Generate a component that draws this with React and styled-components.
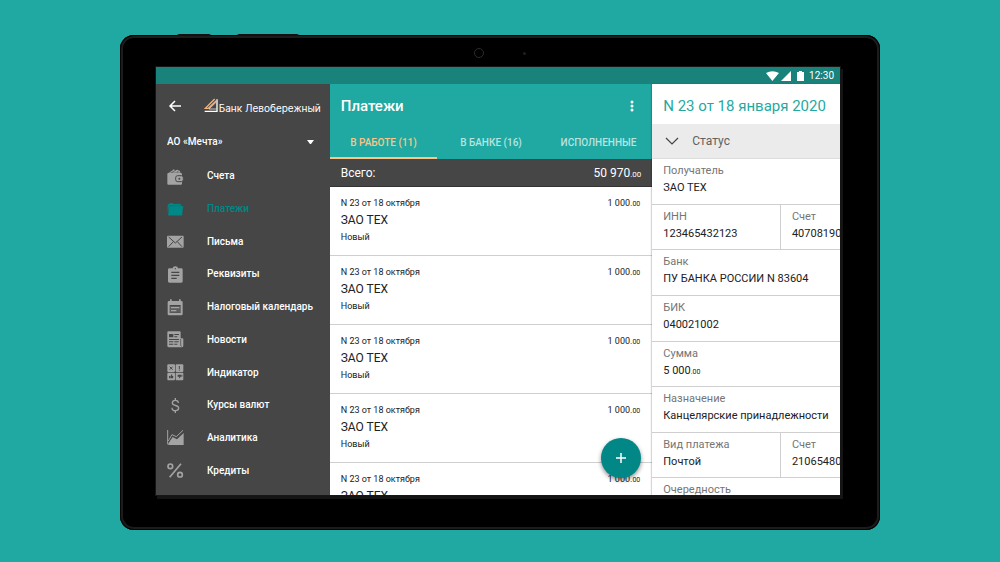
import React, { useState } from 'react';
import styled, { createGlobalStyle, ThemeProvider } from 'styled-components';

const theme = {
  teal: '#1fa9a2',
  tealDeep: '#018786',
  statusBar: '#18827b',
  dark: '#464646',
  icon: '#a3a3a3',
  accent: '#fbc58a',
  line: '#cfcfcf',
  muted: '#757575',
  text: '#212121',
};

const GlobalStyle = createGlobalStyle`
  *, *::before, *::after { box-sizing: border-box; }
  body { margin: 0; font-family: Roboto, "Liberation Sans", sans-serif; }
  h1, h2, p, ul, dl, dd { margin: 0; padding: 0; }
  button, select { font: inherit; border: 0; background: none; padding: 0; cursor: pointer; }
`;

const Page = styled.div`
  height: 100vh;
  min-height: 420px;
  padding: 35px 12% 32px;
  background: ${(p) => p.theme.teal};
  display: flex;
`;

const Tablet = styled.div`
  position: relative;
  flex: 1;
  min-width: 0;
  display: flex;
  padding: 32px 40px 35px 36px;
  background: #000;
  border-radius: 14px;
  box-shadow: inset 0 0 0 1px #000, inset 0 0 0 3px #1c1c1c;
`;

const SideKey = styled.span`
  position: absolute;
  top: -1px;
  left: ${(p) => p.$left}px;
  width: ${(p) => p.$width}px;
  height: 2px;
  background: #111;
  border-radius: 2px 2px 0 0;
`;

const Camera = styled.span`
  position: absolute;
  top: 13px;
  left: 47%;
  width: 10px;
  height: 10px;
  margin-left: -3px;
  border-radius: 50%;
  border: 1px solid #2c2c2c;
`;

const Sensor = styled.span`
  position: absolute;
  top: 17px;
  left: 53%;
  width: 3px;
  height: 3px;
  border-radius: 50%;
  background: #1f1f1f;
`;

const Screen = styled.div`
  flex: 1;
  min-width: 0;
  display: flex;
  flex-direction: column;
  overflow: hidden;
  background: #fff;
  box-shadow: 0 0 0 1px #161616, 2px 3px 0 1px #141414;
`;

const StatusBar = styled.div`
  flex: none;
  height: 17px;
  padding: 0 6px;
  display: flex;
  align-items: center;
  justify-content: flex-end;
  gap: 2px;
  background: ${(p) => p.theme.statusBar};
  color: #fff;
  font-size: 10px;
  line-height: 17px;
  svg { display: block; }
`;

const Columns = styled.div`
  flex: 1;
  min-height: 0;
  display: grid;
  grid-template-columns: 174fr 323fr 188fr;
`;

const Sidebar = styled.aside`
  min-width: 0;
  min-height: 0;
  display: flex;
  flex-direction: column;
  padding-bottom: 8px;
  background: ${(p) => p.theme.dark};
  color: #fff;
`;

const Brand = styled.div`
  height: 44px;
  padding: 0 9px 0 11px;
  display: flex;
  align-items: center;
  justify-content: space-between;
`;

const IconButton = styled.button`
  display: flex;
  color: #fff;
`;

const Logo = styled.a`
  display: flex;
  align-items: flex-end;
  gap: 1px;
  color: #fff;
  text-decoration: none;
  white-space: nowrap;
  font-family: Inter, Roboto, sans-serif;
  font-size: 10px;
  line-height: 12px;
`;

const Account = styled.label`
  height: 32px;
  padding: 0 16px 5px 11px;
  display: flex;
  align-items: center;
  select {
    flex: 1;
    appearance: none;
    color: #fff;
    font-size: 10px;
    font-weight: 500;
    line-height: 16px;
    outline: none;
  }
`;

const Nav = styled.nav`
  flex: 1;
  min-height: 0;
  display: grid;
  grid-auto-rows: 1fr;
`;

const NavItem = styled.a`
  min-height: 0;
  padding-left: 11px;
  display: flex;
  align-items: center;
  gap: 23px;
  color: ${(p) => (p.$active ? p.theme.tealDeep : '#fff')};
  font-size: 10px;
  font-weight: 500;
  line-height: 16px;
  text-decoration: none;
  white-space: nowrap;
  svg { flex: none; color: ${(p) => (p.$active ? p.theme.tealDeep : p.theme.icon)}; }
`;

const Main = styled.main`
  position: relative;
  min-width: 0;
  min-height: 0;
  display: flex;
  flex-direction: column;
  overflow: hidden;
  background: #fff;
`;

const MainHeader = styled.header`
  flex: none;
  background: ${(p) => p.theme.teal};
  color: #fff;
`;

const TitleRow = styled.div`
  height: 43px;
  padding: 0 18px 0 11px;
  display: flex;
  align-items: center;
  justify-content: space-between;
  h1 { font-size: 15px; font-weight: 500; line-height: 20px; }
`;

const Tabs = styled.div`
  display: grid;
  grid-template-columns: repeat(3, 1fr);
`;

const Tab = styled.button`
  height: 32px;
  border-bottom: 2px solid ${(p) => (p.$active ? p.theme.accent : 'transparent')};
  color: ${(p) => (p.$active ? p.theme.accent : '#b9e3e0')};
  font-size: 10px;
  font-weight: 500;
  white-space: nowrap;
`;

const Total = styled.div`
  flex: none;
  height: 28px;
  padding: 0 11px;
  display: flex;
  align-items: center;
  justify-content: space-between;
  background: ${(p) => p.theme.dark};
  border-bottom: 1px solid #333;
  color: #fff;
  font-size: 12px;
`;

const Cents = styled.small`
  font-size: ${(p) => p.$size || 7}px;
`;

const Payments = styled.ul`
  list-style: none;
`;

const Payment = styled.li`
  height: 69px;
  padding: 10px 12px 0 11px;
  display: flex;
  flex-direction: column;
  gap: 2px;
  border-bottom: 1px solid ${(p) => p.theme.line};
  color: ${(p) => p.theme.text};
  font-size: 9px;
  line-height: 12px;
`;

const PaymentMeta = styled.div`
  display: flex;
  justify-content: space-between;
`;

const Payee = styled.p`
  font-size: 12px;
  line-height: 17px;
`;

const Fab = styled.button`
  position: absolute;
  right: 11px;
  bottom: 17px;
  width: 40px;
  height: 40px;
  border-radius: 50%;
  display: flex;
  align-items: center;
  justify-content: center;
  background: ${(p) => p.theme.tealDeep};
  box-shadow: 0 2px 4px rgba(0, 0, 0, 0.45);
`;

const Detail = styled.section`
  position: relative;
  min-width: 0;
  min-height: 0;
  overflow: hidden;
  background: #fff;
  box-shadow: -1px 0 1px rgba(0, 0, 0, 0.16);
  h2 {
    height: 40px;
    padding: 0 11px;
    color: ${(p) => p.theme.teal};
    font-size: 15px;
    font-weight: 400;
    line-height: 44px;
    white-space: nowrap;
  }
`;

const StatusToggle = styled.button`
  width: 100%;
  height: 35px;
  padding: 0 13px;
  display: flex;
  align-items: center;
  gap: 13px;
  background: #ebebeb;
  border-bottom: 1px solid #dcdcdc;
  color: #616161;
  font-size: 12px;
`;

const Fields = styled.dl`
  height: 365px;
  display: grid;
  grid-auto-rows: 1fr;
`;

const FieldRow = styled.div`
  display: flex;
  min-height: 0;
  border-bottom: 1px solid ${(p) => p.theme.line};
`;

const Field = styled.div`
  flex: ${(p) => (p.$half ? '0 0 68%' : '1 0 0')};
  padding: 3px 0 0 11px;
  font-size: 11px;
  line-height: 17px;
  white-space: nowrap;
  & + & { border-left: 1px solid ${(p) => p.theme.line}; }
  dt { color: ${(p) => p.theme.muted}; }
  dd { color: ${(p) => p.theme.text}; }
`;

const D = '#464646';

const icons = {
  wallet: (
    <>
      <path fill="currentColor" d="M4 14 14 9l6-5 5 3 6-2 7 3 3 6z" />
      <path stroke={D} strokeWidth="2" fill="none" d="M13 14 27 6M30 14l4-6" />
      <path fill="currentColor" d="M4 15h38a3 3 0 0 1 3 3v29a3 3 0 0 1-3 3H4a3 3 0 0 1-3-3V18a3 3 0 0 1 3-3z" />
      <rect x="26" y="23" width="23" height="18" rx="6" fill="currentColor" stroke={D} strokeWidth="3" />
      <circle cx="37" cy="32" r="3" fill={D} />
    </>
  ),
  folder: (
    <>
      <path fill="currentColor" d="M2 12 6 8l9-3 6 4 18-1 4 4v4H8l-5 19-1-5z" />
      <path fill="currentColor" stroke={D} strokeWidth="1" d="M9 14h38a2 2 0 0 1 2 3l-3 25a3 3 0 0 1-3 2H5a3 3 0 0 1-2-3l3-24a3 3 0 0 1 3-3z" />
    </>
  ),
  mail: (
    <>
      <rect x="0" y="8" width="50" height="36" rx="3" fill="currentColor" />
      <path stroke={D} strokeWidth="3" fill="none" d="m5 12 20 18 20-18M5 41l14-15M45 41 31 26" />
    </>
  ),
  clipboard: (
    <>
      <path fill="currentColor" d="M7 7h10a8 6 0 0 1 16 0h10a4 4 0 0 1 4 4v35a4 4 0 0 1-4 4H7a4 4 0 0 1-4-4V11a4 4 0 0 1 4-4z" />
      <circle cx="25" cy="8" r="2" fill={D} />
      <path stroke={D} strokeWidth="4" d="M13 19h24M13 28h24M13 37h16" />
    </>
  ),
  calendar: (
    <>
      <path fill="currentColor" d="M9 1h5v5h22V1h5v5h2a4 4 0 0 1 4 4v35a4 4 0 0 1-4 4H6a4 4 0 0 1-4-4V10a4 4 0 0 1 4-4h3z" />
      <path fill={D} d="M8 18h33v24H8z" />
      <path fill="currentColor" d="M8 21h33v20H8z" opacity=".25" />
      <path stroke="currentColor" strokeWidth="4" d="M12 26h25M12 35h16" />
    </>
  ),
  news: (
    <>
      <path fill="currentColor" d="M4 1h34a3 3 0 0 1 3 3v18h5a3 3 0 0 1 3 3v19a5 5 0 0 1-5 5H6a5 5 0 0 1-5-5V4a3 3 0 0 1 3-3z" />
      <path fill={D} d="M6 9h13v10H6zM22 9h14v3H22zM22 16h9v3h-9zM6 24h30v3H6zM6 31h13v3H6zM6 38h13v3H6zM22 31h13v3H22zM22 38h9v3h-9z" />
      <path stroke={D} strokeWidth="2" fill="none" d="M41 24v18q0 4 3 4" />
    </>
  ),
  indicator: (
    <>
      {[1, 26].map((x) => [1, 26].map((y) => (
        <rect key={`${x}-${y}`} x={x} y={y} width="23" height="23" rx="3" fill="currentColor" />
      )))}
      <path stroke={D} strokeWidth="3" d="m8 8 9 9M17 8l-9 9M37 6v9M37 17v3" />
      <path fill={D} d="M6 36h3v7H6zM10 37l4-6 2 1-1 4h4l-1 7h-8zM43 32h3v6h-3zM32 32h10v5l-4 6-2-1 1-4h-5z" />
    </>
  ),
  dollar: (
    <path
      stroke="currentColor"
      strokeWidth="4"
      fill="none"
      d="M25 3v7M25 41v7M34 18c0-5-4-8-9-8s-9 3-9 8c0 10 19 5 19 15 0 5-4 8-10 8s-10-3-10-9"
    />
  ),
  chart: (
    <>
      <path stroke="currentColor" strokeWidth="3" fill="none" d="M2 3v43" />
      <path stroke="currentColor" strokeWidth="3" fill="none" d="M4 36 15 17l13 6L48 4" />
      <path fill="currentColor" d="M4 47v-4l13-19 13 7L50 12v36H3z" />
      <path stroke={D} strokeWidth="2" fill="none" d="M4 41 16 21l13 7L49 8" />
    </>
  ),
  percent: (
    <g stroke="currentColor" strokeWidth="5" fill="none">
      <circle cx="10" cy="13" r="7" />
      <circle cx="39" cy="38" r="7" />
      <path d="M42 5 8 46" />
    </g>
  ),
};

const NavIcon = ({ name }) => (
  <svg width="17" height="17" viewBox="0 0 51 51" aria-hidden="true">{icons[name]}</svg>
);

const navItems = [
  ['wallet', 'Счета'],
  ['folder', 'Платежи'],
  ['mail', 'Письма'],
  ['clipboard', 'Реквизиты'],
  ['calendar', 'Налоговый календарь'],
  ['news', 'Новости'],
  ['indicator', 'Индикатор'],
  ['dollar', 'Курсы валют'],
  ['chart', 'Аналитика'],
  ['percent', 'Кредиты'],
];

const tabs = ['В РАБОТЕ (11)', 'В БАНКЕ (16)', 'ИСПОЛНЕННЫЕ'];

const payments = Array.from({ length: 5 }, () => ({
  title: 'N 23 от 18 октября',
  payee: 'ЗАО ТЕХ',
  state: 'Новый',
  sum: '1 000',
}));

const fields = [
  [['Получатель', 'ЗАО ТЕХ']],
  [['ИНН', '123465432123'], ['Счет', '40708190']],
  [['Банк', 'ПУ БАНКА РОССИИ N 83604']],
  [['БИК', '040021002']],
  [['Сумма', <>5 000<Cents>.00</Cents></>]],
  [['Назначение', 'Канцелярские принадлежности']],
  [['Вид платежа', 'Почтой'], ['Счет', '21065480']],
  [['Очередность', '']],
];

export default function App() {
  const [tab, setTab] = useState(0);
  const [section, setSection] = useState('Платежи');

  return (
    <ThemeProvider theme={theme}>
      <GlobalStyle />
      <Page>
        <Tablet>
          <SideKey $left={57} $width={34} />
          <SideKey $left={117} $width={62} />
          <Camera />
          <Sensor />
          <Screen>
            <StatusBar>
              <svg width="13" height="10" viewBox="0 0 39 30" aria-hidden="true">
                <path fill="#fff" d="M0 6Q19-5 39 6L19 30z" />
              </svg>
              <svg width="10" height="10" viewBox="0 0 10 10" aria-hidden="true">
                <path fill="#fff" d="M10 0v10H0z" />
              </svg>
              <svg width="14" height="10" viewBox="0 0 14 10" aria-hidden="true">
                <path fill="#fff" d="M4 1h2V0h3v1h2v9H4z" />
              </svg>
              <time>12:30</time>
            </StatusBar>
            <Columns>
              <Sidebar>
                <Brand>
                  <IconButton aria-label="Назад">
                    <svg width="16" height="16" viewBox="0 0 16 16" aria-hidden="true">
                      <path d="M14 8H4M8 3 3 8l5 5" fill="none" stroke="#fff" strokeWidth="1.5" />
                    </svg>
                  </IconButton>
                  <Logo href="#home">
                    <svg width="14" height="16" viewBox="0 0 42 48" aria-hidden="true">
                      <path d="M39 4v36H2" fill="none" stroke="#fff" strokeWidth="4" />
                      <path d="M36 13 15 33h22" fill="none" stroke="#fff" strokeWidth="2" />
                      <path d="M32 3 4 31h9L37 8" fill="none" stroke="#f3b27a" strokeWidth="4" />
                    </svg>
                    Банк Левобережный
                  </Logo>
                </Brand>
                <Account>
                  <select aria-label="Организация" defaultValue="m">
                    <option value="m">АО «Мечта»</option>
                  </select>
                  <svg width="7" height="4" viewBox="0 0 7 4" aria-hidden="true">
                    <path d="M0 0h7L4 4H3z" fill="#fff" />
                  </svg>
                </Account>
                <Nav>
                  {navItems.map(([icon, label]) => (
                    <NavItem
                      key={label}
                      href={`#${icon}`}
                      $active={label === section}
                      onClick={() => setSection(label)}
                    >
                      <NavIcon name={icon} />
                      {label}
                    </NavItem>
                  ))}
                </Nav>
              </Sidebar>

              <Main>
                <MainHeader>
                  <TitleRow>
                    <h1>Платежи</h1>
                    <IconButton aria-label="Меню">
                      <svg width="4" height="12" viewBox="0 0 4 12" fill="#fff" aria-hidden="true">
                        <circle cx="2" cy="2" r="1.5" />
                        <circle cx="2" cy="6" r="1.5" />
                        <circle cx="2" cy="10" r="1.5" />
                      </svg>
                    </IconButton>
                  </TitleRow>
                  <Tabs role="tablist">
                    {tabs.map((label, i) => (
                      <Tab key={label} role="tab" aria-selected={i === tab} $active={i === tab} onClick={() => setTab(i)}>
                        {label}
                      </Tab>
                    ))}
                  </Tabs>
                </MainHeader>
                <Total>
                  <span>Всего:</span>
                  <span>50 970<Cents $size={8}>.00</Cents></span>
                </Total>
                <Payments>
                  {payments.map((p, i) => (
                    <Payment key={i}>
                      <PaymentMeta>
                        <span>{p.title}</span>
                        <span>{p.sum}.<Cents>00</Cents></span>
                      </PaymentMeta>
                      <Payee>{p.payee}</Payee>
                      <p>{p.state}</p>
                    </Payment>
                  ))}
                </Payments>
                <Fab aria-label="Новый платеж">
                  <svg width="12" height="12" viewBox="0 0 12 12" aria-hidden="true">
                    <path d="M6 1v10M1 6h10" stroke="#fff" strokeWidth="1.5" />
                  </svg>
                </Fab>
              </Main>

              <Detail>
                <h2>N 23 от 18 января 2020</h2>
                <StatusToggle aria-expanded="false">
                  <svg width="14" height="8" viewBox="0 0 14 8" aria-hidden="true">
                    <path d="m1 1 6 6 6-6" fill="none" stroke="#444" strokeWidth="1.2" />
                  </svg>
                  Статус
                </StatusToggle>
                <Fields>
                  {fields.map((row) => (
                    <FieldRow key={row[0][0]}>
                      {row.map(([label, value], i) => (
                        <Field key={label} $half={row.length > 1 && i === 0}>
                          <dt>{label}</dt>
                          <dd>{value}</dd>
                        </Field>
                      ))}
                    </FieldRow>
                  ))}
                </Fields>
              </Detail>
            </Columns>
          </Screen>
        </Tablet>
      </Page>
    </ThemeProvider>
  );
}
